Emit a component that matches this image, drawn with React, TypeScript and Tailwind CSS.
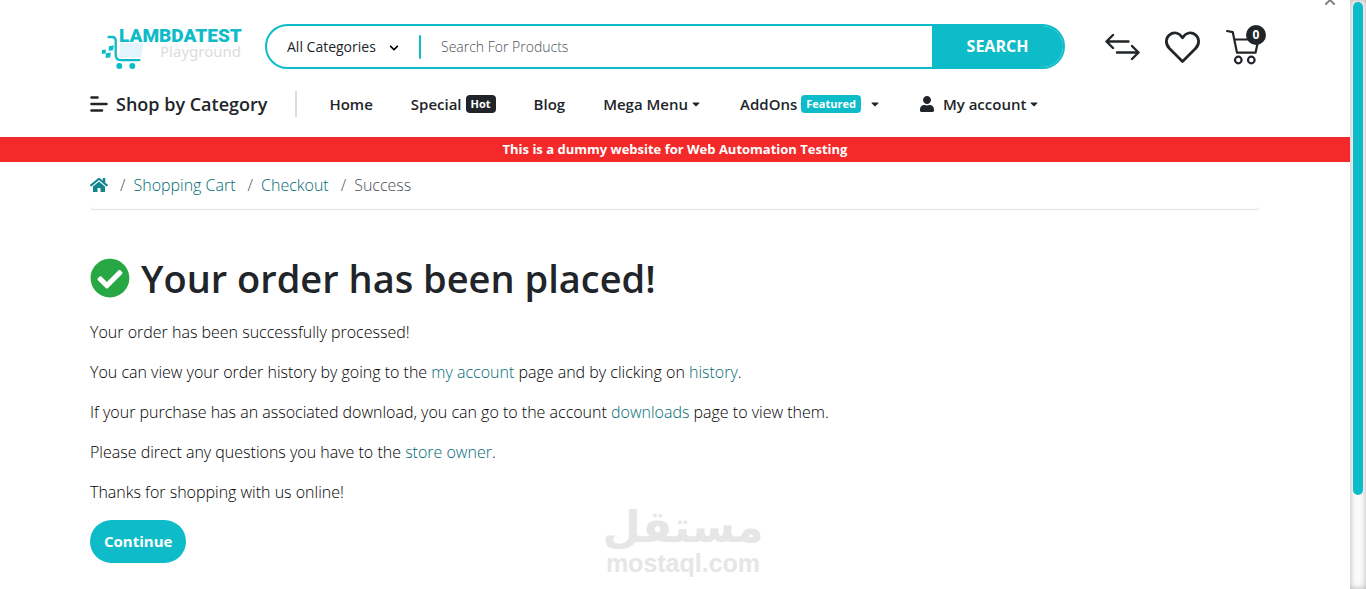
import React from 'react';
import { FaCaretDown, FaCheckCircle, FaChevronDown, FaChevronUp, FaHome, FaUser } from 'react-icons/fa';

function Logo() {
  return (
    <a href="#home" aria-label="LambdaTest Playground" className="shrink-0">
      <svg width="140" height="45" viewBox="0 -1 140 45" className="overflow-visible">
        <path d="M18 18h23.5l-2.3 14.6H17.2z" fill="#e3f4fc" />
        <path
          d="M6.5 12h3.6c2.4 0 3.6 1.4 3.6 3.8v13.8c0 3.8 1.4 5.6 5 5.6h18.8"
          fill="none"
          stroke="#0ebbc9"
          strokeWidth="2.3"
          strokeLinecap="round"
        />
        <circle cx="17.3" cy="41" r="3" fill="#0ebbc9" />
        <circle cx="30.3" cy="41" r="3" fill="#0ebbc9" />
        <path
          d="M7 21.2l4.8-.9-.6 5-4.7.5zM3.800 28.300l5-.7-.5 4.900-4.600.5zM0 25l4-.5-.4 4-3.800.4z"
          fill="#0ebbc9"
        />
        <text x="17" y="17" fill="#0ebbc9" className="font-['Roboto'] text-[19px] font-black">
          LAMBDATEST
        </text>
        <text x="139" y="32" textAnchor="end" fill="#dcdcdc" className="font-['Noto_Sans'] text-[15px]">
          Playground
        </text>
      </svg>
    </a>
  );
}

function SearchBar() {
  return (
    <form className="flex h-[45px] flex-1 items-center overflow-hidden rounded-full border-2 border-[#0ebbc9]">
      <div className="relative ml-5 w-[132px]">
        <select aria-label="Category" className="block w-full appearance-none bg-transparent text-sm text-[#212529] outline-none">
          <option>All Categories</option>
        </select>
        <FaChevronDown className="pointer-events-none absolute top-1.5 right-5 size-[10px] text-black" />
      </div>
      <span className="h-6 w-0.5 rounded-full bg-[#0ebbc9]" />
      <input
        type="text"
        aria-label="Search For Products"
        placeholder="Search For Products"
        className="min-w-0 flex-1 px-5 text-sm font-light outline-none placeholder:text-[#495057]"
      />
      <button type="submit" className="h-full w-[131px] bg-[#0ebbc9] pb-0.5 text-base font-bold text-white">
        SEARCH
      </button>
    </form>
  );
}

function HeaderIcons() {
  return (
    <div className="flex items-center gap-[25px] text-[#212529]">
      <a href="#compare" aria-label="Compare">
        <svg width="35" height="32" viewBox="0 0 35 32" fill="none" stroke="currentColor" strokeWidth="2.4" strokeLinecap="round" strokeLinejoin="round">
          <path d="M23.5 10.5h-22M8 4l-6.5 6.5L8 17M12 21.5h21.5M27 15l6.5 6.5L27 28" />
        </svg>
      </a>
      <a href="#wishlist" aria-label="Wish List">
        <svg width="35" height="32" viewBox="0 0 35 32" fill="none" stroke="currentColor" strokeWidth="2.8" strokeLinejoin="round">
          <path d="M17.5 30.5L4.5 17.5C-.2 12.5 1 6.5 4.5 3.8 8.5 .5 14 1.300 17.500 6.800 21 1.300 26.500 .5 30.500 3.800 34 6.500 35.200 12.500 30.500 17.500z" />
        </svg>
      </a>
      <a href="#cart" aria-label="Cart" className="relative">
        <svg width="35" height="38" viewBox="0 0 35 38" fill="none" stroke="currentColor" strokeWidth="2.2" strokeLinecap="round" strokeLinejoin="round">
          <path d="M2 3l5.800 1.200 4.200 20.500h18.500l3-13.200H9.500" />
          <circle cx="13.300" cy="32" r="3.300" />
          <circle cx="26.300" cy="32" r="3.300" />
        </svg>
        <span className="absolute -top-[3px] -right-1.5 flex size-5 items-center justify-center rounded-full bg-[#212529] text-xs font-bold text-white">
          0
        </span>
      </a>
    </div>
  );
}

function NavBar() {
  return (
    <nav className="flex items-center text-[15px] leading-6 font-semibold">
      <a href="#categories" className="flex items-center gap-2 text-lg leading-6">
        <svg width="18" height="16" viewBox="0 0 18 16" stroke="currentColor" strokeWidth="2.6" strokeLinecap="round">
          <path d="M1.5 1.5h6M1.5 8h15M1.5 14.5h10.5" />
        </svg>
        Shop by Category
      </a>
      <span className="mr-8 ml-7 h-[26px] w-0.5 bg-[#dcdcdc]" />
      <div className="flex items-center gap-[38px]">
        <a href="#home">Home</a>
        <a href="#special" className="flex items-center gap-1">
          Special
          <span className="rounded bg-[#212529] px-[5px] text-[11px] leading-[18px] font-bold text-white">Hot</span>
        </a>
        <a href="#blog">Blog</a>
        <a href="#mega" className="flex items-center gap-0.5">
          Mega Menu
          <FaCaretDown className="size-3" />
        </a>
        <a href="#addons" className="flex items-center gap-1">
          AddOns
          <span className="rounded bg-[#0ebbc9] px-[5px] text-[11px] leading-[18px] font-bold text-white">Featured</span>
          <FaCaretDown className="ml-1 size-3" />
        </a>
        <a href="#account" className="flex items-center gap-0.5">
          <FaUser className="mr-1.5 size-4" />
          My account
          <FaCaretDown className="size-3" />
        </a>
      </div>
    </nav>
  );
}

function Breadcrumb() {
  return (
    <nav aria-label="Breadcrumb" className="flex h-12 items-center gap-2 rounded-b border-b border-[#dee2e6] pb-0.5 font-light text-[#495057]">
      <a href="#home" aria-label="Home" className="mr-1 text-[#11848e]">
        <FaHome className="size-[18px]" />
      </a>
      <span>/</span>
      <a href="#cart" className="mr-1 text-[#006b75]">Shopping Cart</a>
      <span>/</span>
      <a href="#checkout" className="mr-1 text-[#006b75]">Checkout</a>
      <span>/</span>
      <span>Success</span>
    </nav>
  );
}

function OrderPlaced() {
  return (
    <main className="pt-11">
      <h1 className="mb-[18px] flex items-center gap-[11px] text-[38px] leading-[48px] font-semibold">
        <FaCheckCircle className="size-10 shrink-0 text-[#28a745]" />
        Your order has been placed!
      </h1>
      <div className="space-y-4 font-light text-black">
        <p>Your order has been successfully processed!</p>
        <p>
          You can view your order history by going to the <a href="#account" className="text-[#006b75]">my account</a> page
          and by clicking on <a href="#history" className="text-[#006b75]">history</a>.
        </p>
        <p>
          If your purchase has an associated download, you can go to the account{' '}
          <a href="#downloads" className="text-[#006b75]">downloads</a> page to view them.
        </p>
        <p>
          Please direct any questions you have to the <a href="#owner" className="text-[#006b75]">store owner</a>.
        </p>
        <p>Thanks for shopping with us online!</p>
        <a href="#continue" className="block w-fit rounded-full bg-[#0ebbc9] px-3.5 text-[15px] leading-[43px] font-bold text-white">
          Continue
        </a>
      </div>
    </main>
  );
}

export default function App() {
  return (
    <div className="relative flex min-h-screen bg-white font-['Open_Sans',sans-serif] text-base leading-6 text-[#212529]">
      <div className="min-w-0 flex-1">
        <header className="mx-auto max-w-[1170px] pt-6 pb-5">
          <div className="mb-[22px] flex h-[45px] items-center pl-3">
            <Logo />
            <div className="mr-10 ml-[23px] flex flex-1">
              <SearchBar />
            </div>
            <HeaderIcons />
          </div>
          <NavBar />
        </header>
        <div className="bg-[#f42a2a] text-center text-[13px] leading-[25px] font-bold text-white">
          This is a dummy website for Web Automation Testing
        </div>
        <div className="mx-auto max-w-[1170px]">
          <Breadcrumb />
          <OrderPlaced />
        </div>
      </div>

      <aside className="w-4 bg-[#fcfcfc] px-[3px] pt-0.5 shadow-[inset_0_0_6px_rgba(0,0,0,0.3)]">
        <div className="h-[84%] w-full rounded-full bg-[#0ebbc9]" />
      </aside>

      <a href="#top" aria-label="Back to top" className="absolute -top-1 right-[30px] text-[#7d7d7d]">
        <FaChevronUp className="size-3" />
      </a>

      {/* watermark */}
      <div className="pointer-events-none absolute inset-x-0 bottom-2.5 flex flex-col items-center text-[#e6e6e6]">
        <span lang="ar" dir="rtl" className="font-['DejaVu_Sans'] text-[44px] leading-10 font-bold">
          مستقل
        </span>
        <span className="font-['Liberation_Sans'] text-[25px] leading-8 font-bold">mostaql.com</span>
      </div>
    </div>
  );
}
